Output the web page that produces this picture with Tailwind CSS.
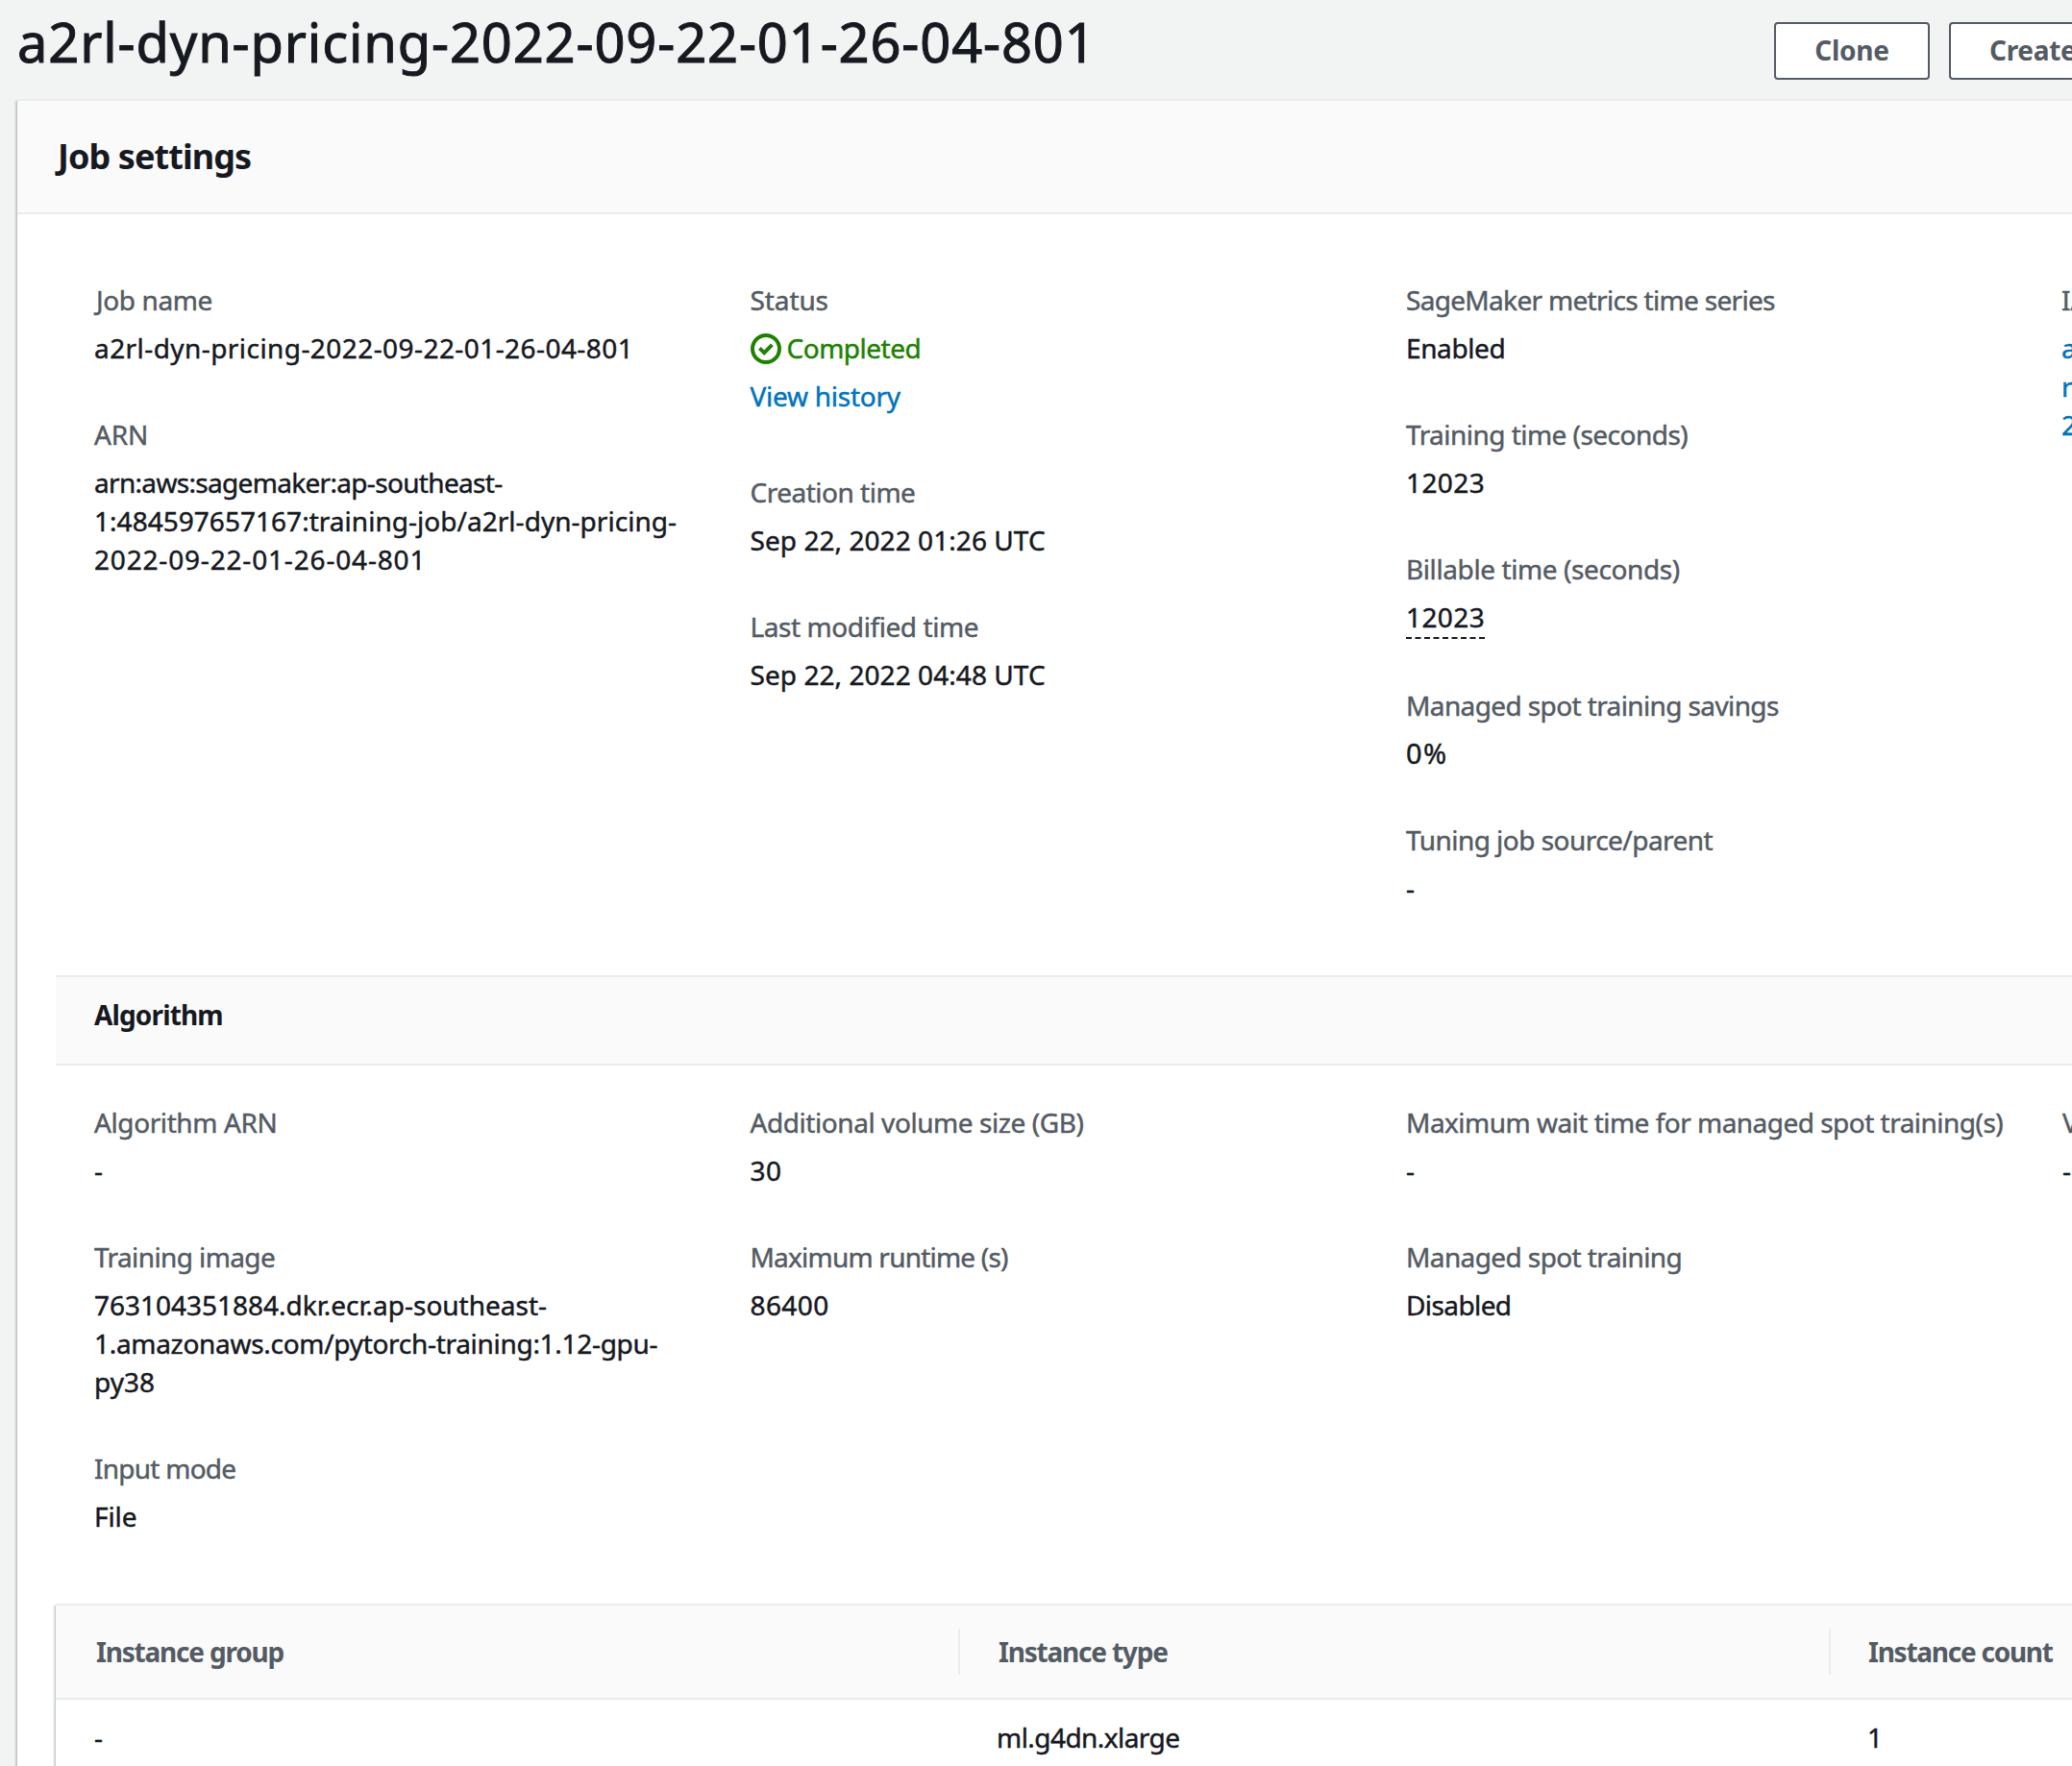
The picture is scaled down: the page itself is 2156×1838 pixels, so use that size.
<!DOCTYPE html>
<html lang="en">
<head>
<meta charset="utf-8">
<title>Training job</title>
<script src="https://cdn.jsdelivr.net/npm/@tailwindcss/browser@4"></script>
</head>
<body class="w-[2156px] h-[1838px] overflow-hidden bg-[#f2f3f3] font-['Noto_Sans',sans-serif] text-[28px] leading-[40px] text-[#16191f] whitespace-nowrap [-webkit-text-stroke:0.45px]">
<div class="flex h-[1838px] w-[2156px] flex-col overflow-hidden pl-[18px]">
  <header class="flex h-[103px] shrink-0 items-start">
    <h1 class="w-[1828px] shrink-0 pt-[5px] text-[56px] leading-[76px] tracking-[0.87px] [-webkit-text-stroke:1px]">a2rl-dyn-pricing-2022-09-22-01-26-04-801</h1>
    <div class="flex shrink-0 gap-[20px] pt-[23px] font-bold text-[#545b64] [-webkit-text-stroke:0px]">
      <button class="h-[60px] w-[162px] rounded-[4px] border-2 border-[#545b64] bg-white pb-[3px] tracking-[-0.2px]">Clone</button>
      <button class="h-[60px] w-[272px] rounded-[4px] border-2 border-[#545b64] bg-white pb-[3px] pl-[40px] text-left tracking-[-0.3px]">Create model</button>
    </div>
  </header>

  <main class="w-[2240px] grow border-t-2 border-[#eaeded] bg-white shadow-[0_2px_2px_0_rgba(0,28,36,0.3),2px_2px_2px_0_rgba(0,28,36,0.15),-2px_2px_2px_0_rgba(0,28,36,0.15)]">
    <div class="h-[118px] border-b-2 border-[#eaeded] bg-[#fafafa] pt-[33px] pl-[42px]">
      <h2 class="text-[36px] leading-[50px] font-bold tracking-[-0.93px] [-webkit-text-stroke:0px]">Job settings</h2>
    </div>

    <!-- Job settings -->
    <section class="grid h-[792px] grid-cols-[682.5px_682.5px_683px_240px] pt-[69px] pl-[80px]">
      <div class="flex flex-col gap-[50px]">
        <div class="flex flex-col gap-[10px]">
          <div class="pl-[2px] tracking-[-0.4px] text-[#545b64]">Job name</div>
          <div class="tracking-[0.43px]">a2rl-dyn-pricing-2022-09-22-01-26-04-801</div>
        </div>
        <div class="flex flex-col gap-[10px]">
          <div class="tracking-[-0.1px] text-[#545b64]">ARN</div>
          <div>
            <div class="tracking-[-0.68px]">arn:aws:sagemaker:ap-southeast-</div>
            <div class="tracking-[0.03px]">1:484597657167:training-job/a2rl-dyn-pricing-</div>
            <div class="tracking-[0.82px]">2022-09-22-01-26-04-801</div>
          </div>
        </div>
      </div>

      <div class="flex flex-col gap-[50px]">
        <div class="mb-[10px] flex flex-col gap-[10px]">
          <div class="tracking-[-0.1px] text-[#545b64]">Status</div>
          <div class="flex items-center gap-[6px] tracking-[-0.49px] text-[#1d8102]">
            <svg class="mt-[2px] size-[32px]" viewBox="0 0 16 16" fill="none" stroke="currentColor" stroke-width="2"><circle cx="8" cy="8" r="7"/><path d="M4.7 7.7 7.1 10.1 11.2 5.9" stroke-width="1.9"/></svg>
            <span>Completed</span>
          </div>
          <a class="tracking-[-0.25px] text-[#0073bb]">View history</a>
        </div>
        <div class="flex flex-col gap-[10px]">
          <div class="tracking-[-0.5px] text-[#545b64]">Creation time</div>
          <div class="tracking-[0.06px]">Sep 22, 2022 01:26 UTC</div>
        </div>
        <div class="flex flex-col gap-[10px]">
          <div class="tracking-[-0.42px] text-[#545b64]">Last modified time</div>
          <div class="tracking-[0.06px]">Sep 22, 2022 04:48 UTC</div>
        </div>
      </div>

      <div class="flex flex-col gap-[50px]">
        <div class="flex flex-col gap-[10px]">
          <div class="tracking-[-0.68px] text-[#545b64]">SageMaker metrics time series</div>
          <div class="tracking-[-0.4px]">Enabled</div>
        </div>
        <div class="flex flex-col gap-[10px]">
          <div class="tracking-[-0.53px] text-[#545b64]">Training time (seconds)</div>
          <div class="tracking-[0.4px]">12023</div>
        </div>
        <div class="flex flex-col gap-[10px]">
          <div class="tracking-[-0.4px] text-[#545b64]">Billable time (seconds)</div>
          <div class="h-[42px]"><span class="block h-[43px] w-[82px] border-b-2 border-dashed border-[#16191f] tracking-[0.4px]">12023</span></div>
        </div>
        <div class="flex flex-col gap-[10px]">
          <div class="tracking-[-0.61px] text-[#545b64]">Managed spot training savings</div>
          <div class="text-[29px] tracking-[1.4px]">0%</div>
        </div>
        <div class="flex flex-col gap-[10px]">
          <div class="tracking-[-0.53px] text-[#545b64]">Tuning job source/parent</div>
          <div>-</div>
        </div>
      </div>

      <div class="flex flex-col gap-[10px]">
        <div class="-ml-[1px] text-[#545b64]">IAM role ARN</div>
        <a class="-ml-[1px] text-[#0073bb]">arn:<br>role<br>2022</a>
      </div>
    </section>

    <!-- Algorithm -->
    <section class="ml-[40px]">
      <h3 class="h-[94px] border-y-2 border-[#eaeded] bg-[#fafafa] pt-[19px] pl-[40px] font-bold tracking-[-0.85px] [-webkit-text-stroke:0px]">Algorithm</h3>
      <div class="grid h-[560px] grid-cols-[682.5px_682.5px_683px_200px] pt-[39px] pl-[40px]">
        <div class="flex flex-col gap-[50px]">
          <div class="flex flex-col gap-[10px]">
            <div class="tracking-[-0.4px] text-[#545b64]">Algorithm ARN</div>
            <div>-</div>
          </div>
          <div class="flex flex-col gap-[10px]">
            <div class="tracking-[-0.6px] text-[#545b64]">Training image</div>
            <div>
              <div class="tracking-[-0.01px]">763104351884.dkr.ecr.ap-southeast-</div>
              <div class="tracking-[-0.3px]">1.amazonaws.com/pytorch-training:1.12-gpu-</div>
              <div>py38</div>
            </div>
          </div>
          <div class="flex flex-col gap-[10px]">
            <div class="tracking-[-0.75px] text-[#545b64]">Input mode</div>
            <div class="tracking-[-0.1px]">File</div>
          </div>
        </div>
        <div class="flex flex-col gap-[50px]">
          <div class="flex flex-col gap-[10px]">
            <div class="tracking-[-0.43px] text-[#545b64]">Additional volume size (GB)</div>
            <div class="tracking-[0.4px]">30</div>
          </div>
          <div class="flex flex-col gap-[10px]">
            <div class="tracking-[-0.78px] text-[#545b64]">Maximum runtime (s)</div>
            <div class="tracking-[0.4px]">86400</div>
          </div>
        </div>
        <div class="flex flex-col gap-[50px]">
          <div class="flex flex-col gap-[10px]">
            <div class="tracking-[-0.52px] text-[#545b64]">Maximum wait time for managed spot training(s)</div>
            <div>-</div>
          </div>
          <div class="flex flex-col gap-[10px]">
            <div class="tracking-[-0.6px] text-[#545b64]">Managed spot training</div>
            <div class="tracking-[-0.6px]">Disabled</div>
          </div>
        </div>
        <div class="flex flex-col gap-[10px]">
          <div class="text-[#545b64]">VPC</div>
          <div>-</div>
        </div>
      </div>

      <!-- Instance groups -->
      <div class="h-[200px] border-t-2 border-[#eaeded] bg-white shadow-[0_2px_2px_0_rgba(0,28,36,0.3),2px_2px_2px_0_rgba(0,28,36,0.15),-2px_2px_2px_0_rgba(0,28,36,0.15)]">
        <div class="grid h-[98px] grid-cols-[939px_906px_300px] items-center border-b-2 border-[#eaeded] bg-[#fafafa] font-bold text-[#545b64] [-webkit-text-stroke:0px]">
          <div class="flex h-[48px] items-center pl-[42px] tracking-[-1.2px]">Instance group</div>
          <div class="flex h-[48px] items-center border-l-2 border-[#eaeded] pl-[40px] tracking-[-1.2px]">Instance type</div>
          <div class="flex h-[48px] items-center border-l-2 border-[#eaeded] pl-[39px] tracking-[-1.25px]">Instance count</div>
        </div>
        <div class="grid grid-cols-[939px_906px_300px] pt-[19px]">
          <div class="pl-[40px]">-</div>
          <div class="pl-[40px] tracking-[-0.55px]">ml.g4dn.xlarge</div>
          <div class="pl-[40px]">1</div>
        </div>
      </div>
    </section>
  </main>
</div>
</body>
</html>
